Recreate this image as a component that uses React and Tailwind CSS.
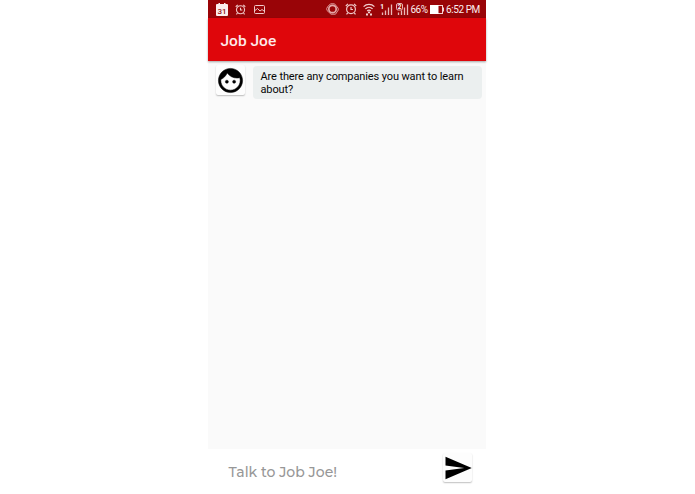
import React from 'react';
import { MdSend } from 'react-icons/md';

function CalendarIcon() {
  return (
    <svg className="h-[13px] w-3 shrink-0" viewBox="0 0 12 13">
      <path d="M1 1h1.500V0h1.500v1h4V0h1.500v1H11a1 1 0 0 1 1 1V12a1 1 0 0 1-1 1H1a1 1 0 0 1-1-1V2a1 1 0 0 1 1-1z" fill="#fbeeee" />
      <text x="6" y="10.500" textAnchor="middle" fontSize="8" fontWeight="500" fontFamily="Roboto, sans-serif" fill="#8f1013">31</text>
    </svg>
  );
}

function AlarmIcon({ className }) {
  return (
    <svg className={className} viewBox="0 0 12 12" fill="none" stroke="#f0c9c9" strokeWidth="1.200">
      <circle cx="6" cy="6.300" r="4.400" />
      <path d="M6 4v2.500h2M.8 3 3 .9M11.200 3 9 .9M2.700 10l-1.200 1.400M9.300 10l1.200 1.400" />
    </svg>
  );
}

function PictureIcon() {
  return (
    <svg className="h-[9px] w-[11px] shrink-0" viewBox="0 0 11 9" fill="none" stroke="#f0c9c9">
      <rect x=".5" y=".5" width="10" height="8" rx="1" />
      <path d="M1 5.500 3.500 3.500 6 6l2-1.500L10 6" />
    </svg>
  );
}

function ApertureIcon() {
  return (
    <svg className="h-3 w-[13px] shrink-0" viewBox="0 0 13 12" fill="none" stroke="#e5a9a9">
      <circle cx="6.500" cy="6" r="3.700" strokeWidth="1.700" />
      <path d="M1.800 3.500 4.500 .8H8.500L12 5 12.300 7 9.500 11.200H5L1 7.500 .7 5.500z" strokeWidth=".9" />
    </svg>
  );
}

function WifiIcon() {
  return (
    <svg className="h-[13px] w-3 shrink-0" viewBox="0 0 12 13" fill="none" stroke="#f3d0d0" strokeWidth="1.300">
      <path d="M.6 3.600a7.800 7.800 0 0 1 10.800 0M2.400 5.900a5.200 5.200 0 0 1 7.200 0M4.200 8a2.700 2.700 0 0 1 3.600 0" />
      <path d="M5 9.300h2M3 11.500h2M7 11.500h2" strokeWidth="1.800" />
    </svg>
  );
}

function SignalIcon({ sim, boxed, className }) {
  return (
    <svg className={className} viewBox="0 0 13 12">
      <path d="M2.500 9.500V12M5.500 7.500V12M8.500 4.500V12M11.500 1.500V12" stroke="#e9b9b9" strokeWidth="1.300" />
      {boxed && <rect x=".5" y=".5" width="6" height="6.500" rx="1.500" fill="#990407" stroke="#f0c9c9" strokeWidth=".9" />}
      <text x={boxed ? 3.5 : 2} y="6" textAnchor="middle" fontSize="6.500" fontWeight="700" fontFamily="Roboto, sans-serif" fill="#fff">{sim}</text>
    </svg>
  );
}

function BatteryIcon() {
  return (
    <svg className="ml-[2px] h-[9px] w-3.5 shrink-0" viewBox="0 0 14 9">
      <rect x=".5" y=".5" width="12" height="8" fill="none" stroke="#f3d0d0" />
      <rect x="0" y="0" width="8.500" height="9" fill="#fff" />
      <rect x="13" y="2.500" width="1" height="4" fill="#f3d0d0" />
    </svg>
  );
}

function FaceIcon() {
  return (
    <svg className="mr-px h-[29px] w-[29px] shrink-0" viewBox="0 0 24 24" fill="#000" stroke="#000" strokeWidth=".4">
      <circle cx="9" cy="13" r="1.250" />
      <circle cx="15" cy="13" r="1.250" />
      <path d="M12 2C6.480 2 2 6.480 2 12s4.480 10 10 10 10-4.480 10-10S17.520 2 12 2zm0 18c-4.410 0-8-3.590-8-8 0-.29.02-.58.05-.86 2.360-1.050 4.230-2.980 5.210-5.370C11.070 8.330 14.050 10 17.420 10c.78 0 1.530-.09 2.250-.26.21.71.33 1.470.33 2.260 0 4.410-3.590 8-8 8z" />
    </svg>
  );
}

export default function App() {
  return (
    <div className="flex h-[494px] w-[695px] overflow-hidden bg-white pl-[208px] font-[Roboto,sans-serif]">
      <div className="flex w-[278px] flex-col bg-[#fafafa]">
        <div className="flex h-[18px] shrink-0 items-center bg-[#990407] pl-2 text-[10px] text-[#fbeeee]">
          <CalendarIcon />
          <AlarmIcon className="ml-[7px] h-[11px] w-[11px] shrink-0" />
          <span className="ml-[7.500px] flex"><PictureIcon /></span>
          <div className="ml-[61px] flex items-center">
            <ApertureIcon />
            <AlarmIcon className="ml-1.5 h-3 w-3 shrink-0" />
            <span className="ml-1.5 flex"><WifiIcon /></span>
            <SignalIcon sim="1" className="ml-[5px] h-3 w-[13px] shrink-0" />
            <SignalIcon sim="2" boxed className="ml-[3px] h-3 w-[13px] shrink-0" />
            <span className="ml-[2px] w-[17px] whitespace-nowrap pt-px tracking-[-0.500px]">66%</span>
            <BatteryIcon />
            <span className="ml-[2.500px] whitespace-nowrap pt-px tracking-[-0.420px]">6:52 PM</span>
          </div>
        </div>
        <header className="z-10 flex h-[43px] shrink-0 items-center bg-[#df060b] pl-[12.500px] pt-[2px] shadow-[0_1px_2px_rgba(0,0,0,0.35)]">
          <h1 className="text-[15.500px] font-medium leading-5 text-[#fdeaea]">Job Joe</h1>
        </header>
        <main className="flex grow items-start pl-2 pt-1">
          <div className="flex h-[30px] w-[29px] items-center justify-center rounded-[2px] bg-[#fdfdfd] shadow-[0_1px_1.500px_rgba(0,0,0,0.25)]">
            <FaceIcon />
          </div>
          <p className="ml-2 mt-px h-[33px] w-[229px] whitespace-nowrap rounded-[4px] bg-[#ebefef] pl-[7.500px] pt-1 text-[11px] leading-[13px] tracking-[-0.110px] text-[#080808]">
            Are there any companies you want to learn<br />about?
          </p>
        </main>
        <footer className="flex h-[45px] shrink-0 items-start bg-white pl-5 pt-1">
          <span className="w-[215px] whitespace-nowrap pl-[0.500px] pt-[9px] font-[Montserrat,Inter,sans-serif] text-[14px] font-medium leading-5 text-[#979797]">Talk to Job Joe!</span>
          <button className="flex h-[29px] w-[29px] items-center justify-center rounded-[2px] bg-[#fdfdfd] shadow-[0_1px_1.500px_rgba(0,0,0,0.25)]">
            <MdSend className="h-[30px] w-[30px] shrink-0 text-black" />
          </button>
        </footer>
      </div>
    </div>
  );
}
